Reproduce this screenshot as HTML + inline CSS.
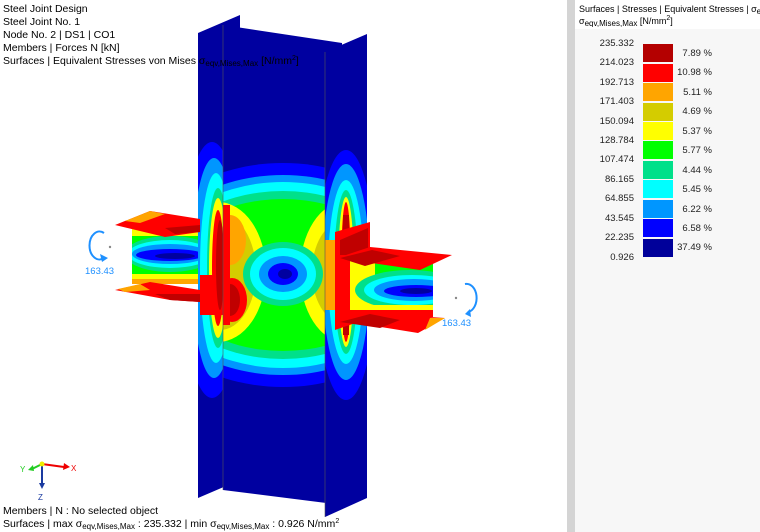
<!DOCTYPE html>
<html><head><meta charset="utf-8"><style>
html,body{margin:0;padding:0;width:760px;height:532px;overflow:hidden;background:#fff;font-family:"Liberation Sans",Arial,sans-serif;}
.t{position:absolute;left:3px;font-size:10.5px;color:#000;line-height:13px;white-space:nowrap;}
sub{font-size:8px;vertical-align:-2px;line-height:0}
sup{font-size:7px;vertical-align:4px;line-height:0}
#strip{position:absolute;left:567px;top:0;width:8px;height:532px;background:#d4d4d4}
#panel{position:absolute;left:575px;top:29px;width:185px;height:503px;background:#f7f7f7}
#ph{position:absolute;left:579px;top:3px;font-size:9px;line-height:12px;color:#000;white-space:nowrap;width:181px;overflow:hidden}
.v{position:absolute;width:60px;left:574px;text-align:right;font-size:9.5px;color:#222}
.s{position:absolute;left:643px;width:30px;height:18px}
.p{position:absolute;width:50px;left:662px;text-align:right;font-size:9.5px;color:#222}
</style></head><body>
<svg width="567" height="532" style="position:absolute;left:0;top:0">
<defs>
<clipPath id="web"><polygon points="223,25 325,40 325,503 223,490"/></clipPath>
<clipPath id="lf"><polygon points="198,33 223,25 223,490 198,498"/></clipPath>
<clipPath id="rf"><polygon points="325,52 367,34 367,498 325,517"/></clipPath>
<clipPath id="lw"><rect x="132" y="228" width="66" height="56"/></clipPath>
<clipPath id="rw"><rect x="335" y="255" width="98" height="62"/></clipPath>
</defs>
<polygon points="198,33 240,15 240,480 198,498" fill="#0000a0"/>
<g clip-path="url(#lf)">
<ellipse cx="212" cy="270" rx="30" ry="128" fill="#0000ff"/>
<ellipse cx="214" cy="268" rx="22" ry="110" fill="#0096ff"/>
<ellipse cx="216" cy="268" rx="16" ry="95" fill="#00ffff"/>
<ellipse cx="218" cy="268" rx="11" ry="80" fill="#00e08a"/>
<ellipse cx="218" cy="268" rx="9" ry="70" fill="#ffff00"/>
<ellipse cx="218" cy="268" rx="6" ry="58" fill="#ff0000"/>
<rect x="200" y="275" width="23" height="40" fill="#ff0000"/>
<ellipse cx="220" cy="265" rx="4" ry="45" fill="#c00000"/>
</g>
<polygon points="223,25 342,43 342,505 223,490" fill="#0000a0"/>
<g clip-path="url(#web)">
<ellipse cx="283" cy="275" rx="150" ry="112" fill="#0000ff"/>
<ellipse cx="283" cy="275" rx="140" ry="100" fill="#0096ff"/>
<ellipse cx="283" cy="275" rx="132" ry="93" fill="#00ffff"/>
<ellipse cx="283" cy="275" rx="124" ry="84" fill="#00e08a"/>
<ellipse cx="283" cy="275" rx="116" ry="76" fill="#00ff00"/>
<ellipse cx="218" cy="272" rx="48" ry="70" fill="#ffff00"/>
<ellipse cx="345" cy="272" rx="45" ry="70" fill="#ffff00"/>
<ellipse cx="220" cy="272" rx="36" ry="58" fill="#d4cc00"/>
<ellipse cx="342" cy="272" rx="30" ry="50" fill="#d4cc00"/>
<ellipse cx="230" cy="240" rx="16" ry="25" fill="#ffa500"/>
<ellipse cx="232" cy="300" rx="15" ry="22" fill="#ff0000"/>
<ellipse cx="230" cy="300" rx="10" ry="16" fill="#c00000"/>
<rect x="223" y="205" width="7" height="120" fill="#ff0000"/>
<ellipse cx="283" cy="274" rx="40" ry="32" fill="#00e08a"/>
<ellipse cx="283" cy="274" rx="33" ry="26" fill="#00ffff"/>
<ellipse cx="283" cy="274" rx="24" ry="18" fill="#0096ff"/>
<ellipse cx="283" cy="274" rx="15" ry="11" fill="#0000ff"/>
<ellipse cx="285" cy="274" rx="7" ry="5" fill="#0000a0"/>
</g>
<line x1="223" y1="25" x2="223" y2="490" stroke="#555" stroke-width="0.6"/>
<polygon points="325,52 367,34 367,498 325,517" fill="#0000a0"/>
<g clip-path="url(#rf)">
<ellipse cx="346" cy="275" rx="30" ry="125" fill="#0000ff"/>
<ellipse cx="346" cy="272" rx="24" ry="108" fill="#0096ff"/>
<ellipse cx="346" cy="272" rx="18" ry="92" fill="#00ffff"/>
<ellipse cx="346" cy="272" rx="12" ry="82" fill="#00e08a"/>
<ellipse cx="346" cy="272" rx="8" ry="75" fill="#ffff00"/>
<ellipse cx="346" cy="272" rx="5" ry="70" fill="#ff0000"/>
<rect x="343" y="215" width="6" height="120" fill="#c00000"/>
<rect x="325" y="240" width="12" height="70" fill="#ffa500"/>
</g>
<line x1="325" y1="52" x2="325" y2="517" stroke="#555" stroke-width="0.6"/>
<rect x="132" y="228" width="66" height="56" fill="#00ff00"/>
<g clip-path="url(#lw)">
<rect x="132" y="228" width="66" height="8" fill="#ffff00"/>
<ellipse cx="170" cy="254" rx="45" ry="18" fill="#00e08a"/>
<ellipse cx="170" cy="254" rx="42" ry="14" fill="#00ffff"/>
<ellipse cx="170" cy="254" rx="38" ry="10" fill="#0096ff"/>
<ellipse cx="170" cy="255" rx="34" ry="6" fill="#0000ff"/>
<ellipse cx="175" cy="256" rx="20" ry="3" fill="#0000a0"/>
<rect x="132" y="274" width="66" height="10" fill="#ffff00"/>
<rect x="132" y="279" width="66" height="5" fill="#ffa500"/>
</g>
<polygon points="115,225 150,211 200,219 200,232 165,237" fill="#ff0000"/>
<polygon points="125,221 150,211 165,214 140,223" fill="#ffa500"/>
<polygon points="165,228 200,225 200,232 175,234" fill="#c00000"/>
<polygon points="115,290 150,282 200,290 200,302 170,300" fill="#ff0000"/>
<polygon points="118,289 140,284 150,290 125,292" fill="#ffa500"/>
<polygon points="155,294 200,294 200,302 170,300" fill="#c00000"/>
<polygon points="335,232 370,222 370,318 335,330" fill="#ff0000"/>
<polygon points="340,240 368,228 368,250 340,258" fill="#c00000"/>
<rect x="335" y="255" width="98" height="62" fill="#00ff00"/>
<g clip-path="url(#rw)">
<rect x="335" y="255" width="40" height="62" fill="#ffff00"/>
<ellipse cx="410" cy="290" rx="55" ry="20" fill="#00e08a"/>
<ellipse cx="412" cy="290" rx="48" ry="15" fill="#00ffff"/>
<ellipse cx="414" cy="290" rx="40" ry="11" fill="#0096ff"/>
<ellipse cx="416" cy="291" rx="32" ry="6" fill="#0000ff"/>
<ellipse cx="416" cy="291" rx="16" ry="3" fill="#0000a0"/>
<rect x="335" y="305" width="98" height="12" fill="#ffff00"/>
<rect x="335" y="310" width="98" height="7" fill="#ff0000"/>
<rect x="335" y="255" width="15" height="62" fill="#ff0000"/>
</g>
<polygon points="337,258 370,247 452,255 420,270" fill="#ff0000"/>
<polygon points="340,258 372,250 400,256 365,266" fill="#c00000"/>
<polygon points="337,320 370,313 445,318 418,333" fill="#ff0000"/>
<polygon points="340,322 370,314 400,320 380,328" fill="#c00000"/>
<polygon points="425,330 445,318 430,318" fill="#ffa500"/>
<path d="M104,233 A10,14 0 1 0 104,258" fill="none" stroke="#1e90ff" stroke-width="2"/>
<polygon points="100,254 108,258 102,262" fill="#1e90ff"/>
<circle cx="110" cy="247" r="1.2" fill="#888"/>
<text x="85" y="274" font-size="9.5" fill="#1e90ff" font-family="Liberation Sans">163.43</text>
<path d="M465,284 A10,14 0 0 1 468,312" fill="none" stroke="#1e90ff" stroke-width="2"/>
<polygon points="465,314 470,309 471,317" fill="#1e90ff"/>
<circle cx="456" cy="298" r="1.2" fill="#888"/>
<text x="442" y="326" font-size="9.5" fill="#1e90ff" font-family="Liberation Sans">163.43</text>
<line x1="42" y1="464" x2="64" y2="467" stroke="#e00" stroke-width="2"/>
<polygon points="64,463 70,467 63,470" fill="#e00"/>
<line x1="42" y1="464" x2="32" y2="469" stroke="#2c2" stroke-width="2"/>
<polygon points="28,470 33,465 34,471" fill="#2c2"/>
<line x1="42" y1="464" x2="42" y2="483" stroke="#1a3aa0" stroke-width="2"/>
<polygon points="39,483 45,483 42,489" fill="#1a3aa0"/>
<circle cx="42" cy="464" r="2.5" fill="#ee0"/>
<text x="71" y="471" font-size="8" fill="#e00" font-family="Liberation Sans">X</text>
<text x="20" y="472" font-size="8" fill="#2c2" font-family="Liberation Sans">Y</text>
<text x="38" y="500" font-size="8" fill="#1a3aa0" font-family="Liberation Sans">Z</text>
</svg>
<div class="t" style="top:3px">Steel Joint Design</div>
<div class="t" style="top:16px">Steel Joint No. 1</div>
<div class="t" style="top:29px">Node No. 2 | DS1 | CO1</div>
<div class="t" style="top:42px">Members | Forces N [kN]</div>
<div class="t" style="top:55px">Surfaces | Equivalent Stresses von Mises σ<sub>eqv,Mises,Max</sub> [N/mm<sup>2</sup>]</div>
<div class="t" style="top:505px">Members | N : No selected object</div>
<div class="t" style="top:518px">Surfaces | max σ<sub>eqv,Mises,Max</sub> : 235.332 | min σ<sub>eqv,Mises,Max</sub> : 0.926 N/mm<sup>2</sup></div>
<div id="strip"></div><div id="panel"></div>
<div id="ph">Surfaces | Stresses | Equivalent Stresses | σ<sub>eqv</sub><br>σ<sub>eqv,Mises,Max</sub> [N/mm<sup>2</sup>]</div>
<div class="v" style="top:38px">235.332</div>
<div class="v" style="top:57px">214.023</div>
<div class="v" style="top:77px">192.713</div>
<div class="v" style="top:96px">171.403</div>
<div class="v" style="top:116px">150.094</div>
<div class="v" style="top:135px">128.784</div>
<div class="v" style="top:154px">107.474</div>
<div class="v" style="top:174px">86.165</div>
<div class="v" style="top:193px">64.855</div>
<div class="v" style="top:213px">43.545</div>
<div class="v" style="top:232px">22.235</div>
<div class="v" style="top:252px">0.926</div>
<div class="s" style="top:44px;background:#b40000"></div>
<div class="s" style="top:64px;background:#ff0000"></div>
<div class="s" style="top:83px;background:#ffa500"></div>
<div class="s" style="top:103px;background:#d4cc00"></div>
<div class="s" style="top:122px;background:#ffff00"></div>
<div class="s" style="top:141px;background:#00ff00"></div>
<div class="s" style="top:161px;background:#00e08a"></div>
<div class="s" style="top:180px;background:#00ffff"></div>
<div class="s" style="top:200px;background:#0096ff"></div>
<div class="s" style="top:219px;background:#0000ff"></div>
<div class="s" style="top:239px;background:#00009a"></div>
<div class="p" style="top:48px">7.89 %</div>
<div class="p" style="top:67px">10.98 %</div>
<div class="p" style="top:87px">5.11 %</div>
<div class="p" style="top:106px">4.69 %</div>
<div class="p" style="top:126px">5.37 %</div>
<div class="p" style="top:145px">5.77 %</div>
<div class="p" style="top:165px">4.44 %</div>
<div class="p" style="top:184px">5.45 %</div>
<div class="p" style="top:204px">6.22 %</div>
<div class="p" style="top:223px">6.58 %</div>
<div class="p" style="top:242px">37.49 %</div>
</body></html>
